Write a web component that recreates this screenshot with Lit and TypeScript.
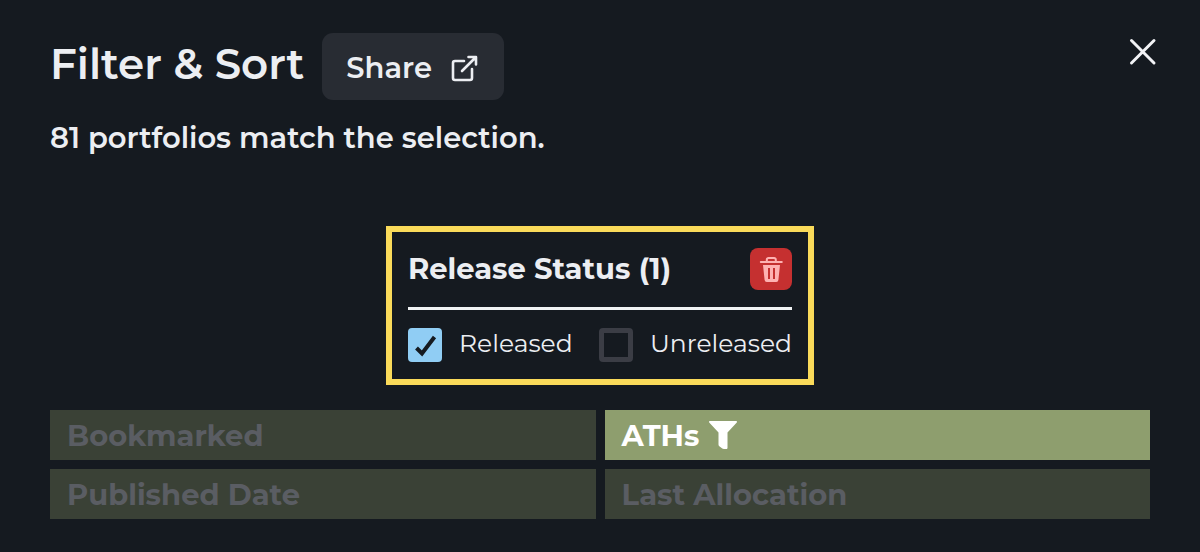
import { LitElement, html, css, svg, nothing } from "lit";
import { customElement, state } from "lit/decorators.js";

interface Category {
  label: string;
  active: boolean;
}

const shareIcon = html`<svg class="share-icon" viewBox="0 0 28 28" aria-hidden="true">
  <path d="M14 7H5a2 2 0 0 0-2 2V24a2 2 0 0 0 2 2H20a2 2 0 0 0 2-2V15M12 17 25.500 3.500M18.500 3h7.500v7.500" />
</svg>`;

const closeIcon = html`<svg class="close-icon" viewBox="0 0 28 28" aria-hidden="true">
  <path d="M2.500 2.500l22.500 22.500M25 2.500l-22.500 22.500" />
</svg>`;

const trashIcon = html`<svg class="trash-icon" viewBox="0 0 24 26" aria-hidden="true">
  <path class="lid" d="M1.800 6h21M7.800 5.500V3.700a1.700 1.700 0 0 1 1.700-1.700h5.600a1.700 1.700 0 0 1 1.700 1.700V5.500" />
  <path class="bin" fill-rule="evenodd" d="M4 9h17l-1.600 15a2.200 2.200 0 0 1-2.200 2H7.800a2.200 2.200 0 0 1-2.200-2zM9 12v11h2v-11zM14 12v11h2v-11z" />
</svg>`;

const funnelIcon = html`<svg class="funnel-icon" viewBox="0 0 28 28" aria-hidden="true">
  <path d="M.8 0h26.400c.8 0 1 .8.600 1.400L18.500 11.500v15.300c0 .8-.5 1.200-1.200 1.200h-2.500c-.6 0-1-.2-1.500-.5l-3-2.300c-.6-.5-.8-.9-.8-1.700V11.500L.2 1.400C-.2.800 0 0 .8 0z" />
</svg>`;

const tick = svg`<path d="M8.500 20l5.500 5.500L26.500 9" />`;

@customElement("app-root")
export class AppRoot extends LitElement {
  static styles = css`
    :host {
      display: block;
      min-height: 100vh;
      box-sizing: border-box;
      padding: 33px 50px;
      background: #151a20;
      color: #eceef2;
      font-family: Montserrat, Inter, sans-serif;
    }
    * {
      box-sizing: border-box;
    }
    button {
      font: inherit;
      color: inherit;
      border: 0;
      cursor: pointer;
    }
    svg {
      display: block;
      flex: none;
    }
    .top {
      display: flex;
      align-items: center;
      gap: 18px;
    }
    h1,
    h2,
    p {
      margin: 0;
    }
    h1 {
      font-size: 42px;
      line-height: 60px;
      font-weight: 600;
      padding-bottom: 6px;
    }
    .share {
      display: flex;
      align-items: center;
      gap: 18px;
      height: 67px;
      padding: 2px 26px 0 24px;
      border-radius: 11px;
      background: #282c33;
      font-size: 29px;
      font-weight: 600;
    }
    .share-icon {
      width: 28px;
      height: 28px;
      fill: none;
      stroke: #eceef2;
      stroke-width: 2.6;
      stroke-linejoin: round;
      stroke-linecap: round;
    }
    .close {
      margin-left: auto;
      align-self: flex-start;
      padding: 5px;
      margin-right: -12px;
      background: none;
    }
    .close-icon {
      width: 28px;
      height: 28px;
      fill: none;
      stroke: #f2f3f6;
      stroke-width: 3;
      stroke-linecap: round;
    }
    .summary {
      margin-top: 20px;
      font-size: 29px;
      line-height: 36px;
      font-weight: 600;
    }
    .card {
      width: 428px;
      max-width: 100%;
      margin: 70px auto 25px;
      padding: 16px 16px 17px;
      border: 6px solid #fadb5a;
    }
    .card-head {
      display: flex;
      align-items: center;
      justify-content: space-between;
      padding-bottom: 17px;
      border-bottom: 3px solid #f0f3f4;
    }
    h2 {
      font-size: 29px;
      line-height: 40px;
      font-weight: 700;
    }
    .clear {
      display: grid;
      place-items: center;
      width: 42px;
      height: 42px;
      padding: 0;
      border-radius: 8px;
      background: #c53030;
    }
    .trash-icon {
      width: 24px;
      height: 26px;
    }
    .lid {
      fill: none;
      stroke: #feb2b2;
      stroke-width: 2;
      stroke-linecap: round;
    }
    .bin {
      fill: #feb2b2;
    }
    .options {
      display: flex;
      justify-content: space-between;
      padding-top: 18px;
    }
    .option {
      display: flex;
      align-items: flex-start;
      gap: 17px;
      font-size: 25px;
      line-height: 30px;
      font-weight: 400;
    }
    .box {
      display: grid;
      flex: none;
      width: 34px;
      height: 34px;
    }
    .box > * {
      grid-area: 1 / 1;
    }
    .box input {
      appearance: none;
      width: 34px;
      height: 34px;
      margin: 0;
      border: 5px solid #3b3d45;
      border-radius: 4px;
    }
    .box input:checked {
      border-color: #90cdf4;
      background: #90cdf4;
    }
    .tick {
      width: 34px;
      height: 34px;
      fill: none;
      stroke: #151a20;
      stroke-width: 4;
      pointer-events: none;
    }
    .categories {
      display: grid;
      grid-template-columns: 1fr 1fr;
      gap: 9px;
    }
    .category {
      display: flex;
      align-items: center;
      gap: 10px;
      height: 50px;
      padding: 0 17px;
      background: #3a4136;
      color: #5a5d63;
      font-size: 29px;
      font-weight: 700;
    }
    .category.active {
      background: #8e9e6e;
      color: #fff;
    }
    .funnel-icon {
      width: 28px;
      height: 28px;
      fill: #fff;
    }
  `;

  @state() private released = true;
  @state() private unreleased = false;

  private categories: Category[] = [
    { label: "Bookmarked", active: false },
    { label: "ATHs", active: true },
    { label: "Published Date", active: false },
    { label: "Last Allocation", active: false },
  ];

  private clear() {
    this.released = false;
    this.unreleased = false;
  }

  private option(label: string, checked: boolean, set: (v: boolean) => void) {
    return html`<label class="option">
      <span class="box">
        <input type="checkbox" .checked=${checked}
          @change=${(e: Event) => set((e.target as HTMLInputElement).checked)} />
        ${checked ? html`<svg class="tick" viewBox="0 0 34 34" aria-hidden="true">${tick}</svg>` : nothing}
      </span>
      <span>${label}</span>
    </label>`;
  }

  render() {
    const count = Number(this.released) + Number(this.unreleased);
    return html`
      <header class="top">
        <h1>Filter &amp; Sort</h1>
        <button class="share">Share ${shareIcon}</button>
        <button class="close" aria-label="Close">${closeIcon}</button>
      </header>
      <p class="summary">81 portfolios match the selection.</p>
      <section class="card">
        <div class="card-head">
          <h2>Release Status (${count})</h2>
          <button class="clear" aria-label="Clear" @click=${this.clear}>${trashIcon}</button>
        </div>
        <div class="options">
          ${this.option("Released", this.released, (v) => (this.released = v))}
          ${this.option("Unreleased", this.unreleased, (v) => (this.unreleased = v))}
        </div>
      </section>
      <nav class="categories">
        ${this.categories.map(
          (c) => html`<button class="category ${c.active ? "active" : ""}" ?disabled=${!c.active}>
            ${c.label} ${c.active ? funnelIcon : nothing}
          </button>`
        )}
      </nav>
    `;
  }
}
